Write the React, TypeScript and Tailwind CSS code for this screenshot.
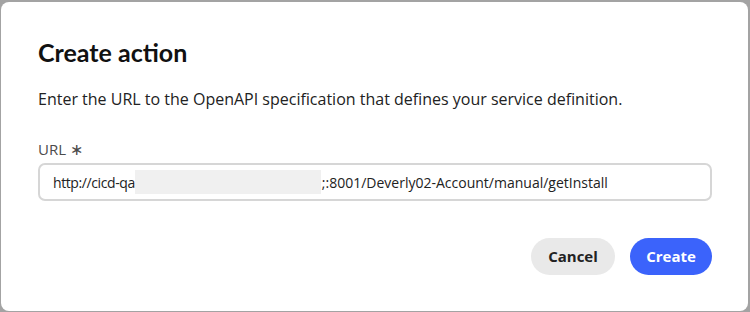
import React from "react";

export default function App(): React.ReactElement {
    return (
        <div className="h-[312px] w-[750px] bg-[#a3a3a3] pt-[2px] pr-[2px] pb-[1px] pl-[1px]">
            <div
                className="flex h-full flex-col rounded-[8px] bg-white pt-[35px] pr-[36px] pl-[37px] text-[#222222]"
                style={{ fontFamily: "'Open Sans', 'Noto Sans', sans-serif" }}
            >
                <h1
                    className="text-[25px] leading-[30px] font-bold text-[#111111]"
                    style={{ fontFamily: "Lato, 'Open Sans', sans-serif" }}
                >
                    Create action
                </h1>
                <p className="mt-[21px] text-[16px] leading-[22px]">
                    Enter the URL to the OpenAPI specification that defines your service definition.
                </p>
                <label className="mt-[29px] text-[15px] leading-[20px] text-[#4b4b4b]">
                    URL <span className="text-[16px]">∗</span>
                </label>
                <div className="mt-[4px] flex h-[38px] items-center rounded-[7px] border-2 border-[#d6d6d6] pl-[13px] text-[14px]">
                    <span className="whitespace-nowrap tracking-[-0.4px]">http://cicd-qa</span>
                    <span className="h-[24px] w-[186px] bg-[#f0f0f0]" />
                    <span className="pl-[1px]">;:8001/Deverly02-Account/manual/getInstall</span>
                </div>
                <div className="mt-[37px] flex justify-end gap-[15px]">
                    <button className="h-[37px] w-[84px] rounded-full bg-[#e9e9e9] text-[15px] font-bold text-[#222222]">
                        Cancel
                    </button>
                    <button className="h-[37px] w-[82px] rounded-full bg-[#3b63fb] text-[15px] font-bold text-white">
                        Create
                    </button>
                </div>
            </div>
        </div>
    );
}
